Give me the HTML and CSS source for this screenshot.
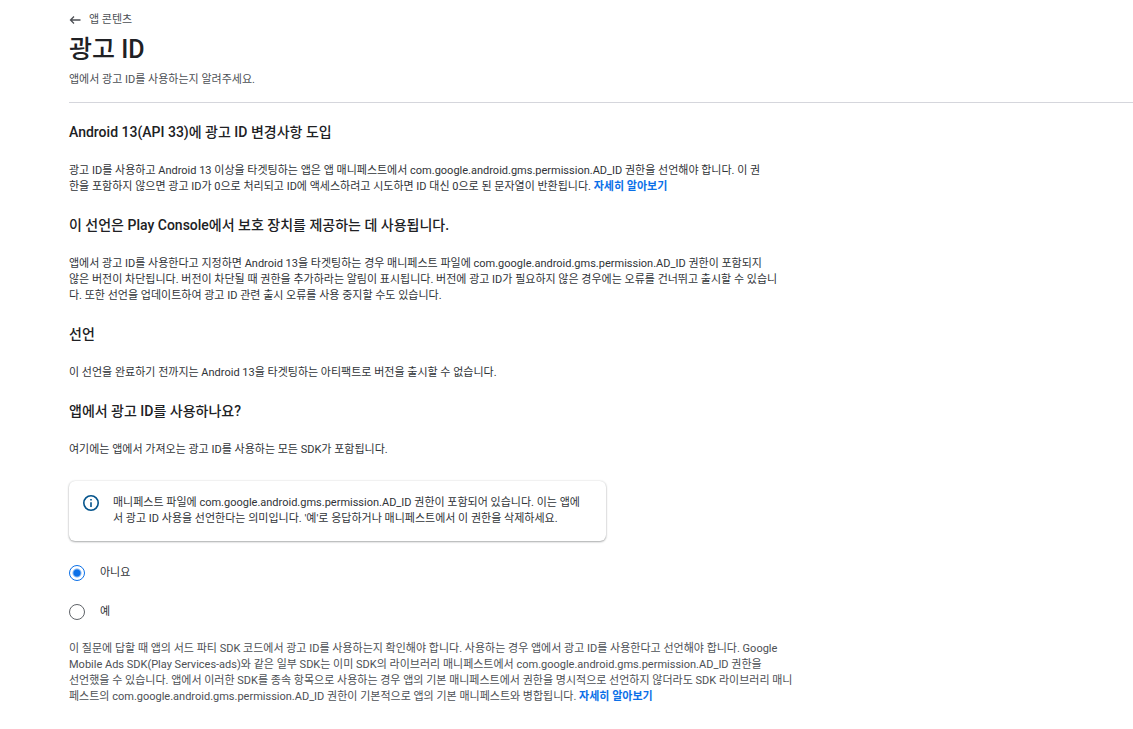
FILE: index.html
```html
<!DOCTYPE html>
<html lang="ko">
<head>
  <meta charset="UTF-8">
  <meta name="viewport" content="width=device-width, initial-scale=1">
  <title>광고 ID</title>
  <link rel="stylesheet" href="styles.css">
</head>
<body>

  <!-- Page header -->
  <header class="header">
    <a class="back-link" href="#">
      <svg class="back-icon" viewBox="0 0 12 10" aria-hidden="true">
        <path d="M5 1.5 1.5 5 5 8.500M1.500 5H11.500" fill="none" stroke="currentColor" stroke-width="1.300"/>
      </svg>
      <span>앱 콘텐츠</span>
    </a>
    <h1>광고 ID</h1>
    <p class="subtitle">앱에서 광고 ID를 사용하는지 알려주세요.</p>
  </header>

  <main class="content">
    <section class="section">
      <h2>Android 13(API 33)에 광고 ID 변경사항 도입</h2>
      <p>광고 ID를 사용하고 Android 13 이상을 타겟팅하는 앱은 앱 매니페스트에서 com.google.android.gms.permission.AD_ID 권한을 선언해야 합니다. 이 권<br>한을 포함하지 않으면 광고 ID가 0으로 처리되고 ID에 액세스하려고 시도하면 ID 대신 0으로 된 문자열이 반환됩니다. <a href="#">자세히 알아보기</a></p>
    </section>

    <section class="section">
      <h2>이 선언은 Play Console에서 보호 장치를 제공하는 데 사용됩니다.</h2>
      <p>앱에서 광고 ID를 사용한다고 지정하면 Android 13을 타겟팅하는 경우 매니페스트 파일에 com.google.android.gms.permission.AD_ID 권한이 포함되지<br>않은 버전이 차단됩니다. 버전이 차단될 때 권한을 추가하라는 알림이 표시됩니다. 버전에 광고 ID가 필요하지 않은 경우에는 오류를 건너뛰고 출시할 수 있습니<br>다. 또한 선언을 업데이트하여 광고 ID 관련 출시 오류를 사용 중지할 수도 있습니다.</p>
    </section>

    <section class="section">
      <h2>선언</h2>
      <p>이 선언을 완료하기 전까지는 Android 13을 타겟팅하는 아티팩트로 버전을 출시할 수 없습니다.</p>
    </section>

    <section class="section">
      <h2 id="question">앱에서 광고 ID를 사용하나요?</h2>
      <p>여기에는 앱에서 가져오는 광고 ID를 사용하는 모든 SDK가 포함됩니다.</p>
    </section>

    <!-- Notice -->
    <div class="notice">
      <svg class="notice-icon" viewBox="0 0 16 16" aria-hidden="true">
        <circle cx="8" cy="8" r="7.2" fill="none" stroke="currentColor" stroke-width="1.6"/>
        <path d="M8 7.2V12M8 4v1.6" fill="none" stroke="currentColor" stroke-width="1.6"/>
      </svg>
      <p>매니페스트 파일에 com.google.android.gms.permission.AD_ID 권한이 포함되어 있습니다. 이는 앱에<br>서 광고 ID 사용을 선언한다는 의미입니다. '예'로 응답하거나 매니페스트에서 이 권한을 삭제하세요.</p>
    </div>

    <!-- Answer -->
    <div class="options" role="radiogroup" aria-labelledby="question">
      <div class="option">
        <input type="radio" id="answer-no" name="answer" value="no" checked>
        <label for="answer-no">아니요</label>
      </div>
      <div class="option">
        <input type="radio" id="answer-yes" name="answer" value="yes">
        <label for="answer-yes">예</label>
      </div>
    </div>

    <p class="hint">이 질문에 답할 때 앱의 서드 파티 SDK 코드에서 광고 ID를 사용하는지 확인해야 합니다. 사용하는 경우 앱에서 광고 ID를 사용한다고 선언해야 합니다. Google<br>Mobile Ads SDK(Play Services-ads)와 같은 일부 SDK는 이미 SDK의 라이브러리 매니페스트에서 com.google.android.gms.permission.AD_ID 권한을<br>선언했을 수 있습니다. 앱에서 이러한 SDK를 종속 항목으로 사용하는 경우 앱의 기본 매니페스트에서 권한을 명시적으로 선언하지 않더라도 SDK 라이브러리 매니<br>페스트의 com.google.android.gms.permission.AD_ID 권한이 기본적으로 앱의 기본 매니페스트와 병합됩니다. <a href="#">자세히 알아보기</a></p>
  </main>

</body>
</html>
```
FILE: styles.css
```css
* {
  box-sizing: border-box;
}

body {
  margin: 0;
  padding: 12px 0 24px 69px;
  background-color: #fff;
  color: #303337;
  font-family: Roboto, "Noto Sans CJK KR", sans-serif;
  font-size: 11px;
  line-height: 16px;
}

h1, h2, p {
  margin: 0;
}

a {
  color: #0b70e8;
  font-weight: 700;
  text-decoration: none;
}

/* Header */
.header {
  border-bottom: 1px solid #d5d6dc;
  padding-bottom: 14px;
}

.header .back-link {
  display: inline-flex;
  align-items: center;
  gap: 8px;
  color: #4c4f54;
  font-weight: 400;
}

.back-icon {
  width: 12px;
  height: 10px;
}

h1 {
  margin-top: 2px;
  color: #202124;
  font-size: 25px;
  font-weight: 500;
  line-height: 36px;
}

.subtitle {
  margin-top: 4px;
  color: #4c4f54;
}

/* Sections */
.content {
  padding-top: 19px;
}

.section {
  max-width: 720px;
  margin-bottom: 20px;
}

h2 {
  margin-bottom: 20px;
  color: #202124;
  font-size: 14px;
  font-weight: 500;
  line-height: 21px;
}

/* Notice */
.notice {
  display: flex;
  gap: 14px;
  max-width: 537px;
  margin-top: 23px;
  padding: 14px;
  border-radius: 6px;
  box-shadow: 0 1px 2px rgba(60, 64, 67, 0.4), 0 0 2px rgba(60, 64, 67, 0.2);
}

.notice-icon {
  flex: none;
  width: 16px;
  height: 16px;
  color: #04548c;
}

/* Radio options */
.options {
  margin-top: 12px;
}

.option {
  display: flex;
  align-items: center;
  gap: 15px;
  height: 39px;
}

.option input {
  appearance: none;
  flex: none;
  width: 16px;
  height: 16px;
  margin: 0;
  border: 1px solid #5f6368;
  border-radius: 50%;
}

.option input:checked {
  border-color: #0b70e8;
  background: radial-gradient(circle, #0b70e8 3px, transparent 5px);
}

.hint {
  max-width: 730px;
  margin-top: 10px;
  color: #4c4f54;
}
```
